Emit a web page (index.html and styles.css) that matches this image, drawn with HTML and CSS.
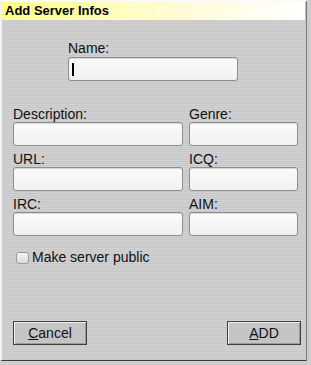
FILE: index.html
```html
<!DOCTYPE html>
<html lang="en">
<head>
  <meta charset="UTF-8">
  <title>Add Server Infos</title>
  <link rel="stylesheet" href="styles.css">
</head>
<body>
  <div class="window">
    <div class="titlebar">Add Server Infos</div>

    <div class="content">
      <div class="name-field">
        <div class="label">Name:</div>
        <div class="input"><span class="caret"></span></div>
      </div>

      <div class="fields">
        <div class="field">
          <div class="label">Description:</div>
          <div class="input"></div>
        </div>
        <div class="field">
          <div class="label">Genre:</div>
          <div class="input"></div>
        </div>
        <div class="field">
          <div class="label">URL:</div>
          <div class="input"></div>
        </div>
        <div class="field">
          <div class="label">ICQ:</div>
          <div class="input"></div>
        </div>
        <div class="field">
          <div class="label">IRC:</div>
          <div class="input"></div>
        </div>
        <div class="field">
          <div class="label">AIM:</div>
          <div class="input"></div>
        </div>
      </div>

      <label class="check-row">
        <span class="checkbox"></span>
        <span>Make server public</span>
      </label>

      <div class="buttons">
        <button class="btn"><u>C</u>ancel</button>
        <button class="btn"><u>A</u>DD</button>
      </div>
    </div>
  </div>
</body>
</html>
```

FILE: styles.css
```css
body {
  margin: 0;
  padding: 0;
  font-family: "Liberation Sans", Arial, sans-serif;
  font-size: 14px;
  color: #111;
  background: repeating-linear-gradient(#d2d2d2 0 1px, #c7c7c7 1px 2px);
}

.window {
  box-sizing: border-box;
  width: 307px;
  height: 361px;
  border-left: 2px solid #f2f2f2;
  border-top: 2px solid #fafafa;
  border-right: 1px solid #7a7a7a;
  border-bottom: 1px solid #3c3c3c;
}

.titlebar {
  height: 18px;
  line-height: 18px;
  padding-left: 3px;
  font-size: 13px;
  font-weight: bold;
  color: #000;
  background: linear-gradient(to right, #ffff8c, #fffbd8 60%, #ffffff);
  border-right: 1px solid #bcbcbc;
}

.content {
  padding: 0 5px 0 11px;
}

.label {
  line-height: 15px;
  height: 15px;
}

.input {
  box-sizing: border-box;
  height: 24px;
  border: 1px solid #8e8e8e;
  border-radius: 3px;
  background: linear-gradient(#fbfbfb, #f1f1f1);
  box-shadow: inset 0 1px 0 #d8d8d8;
}

.name-field {
  width: 170px;
  margin: 21px 0 0 55px;
}

.name-field .input {
  margin-top: 1px;
  padding: 5px 0 0 3px;
}

.caret {
  display: block;
  width: 2px;
  height: 13px;
  background: #000;
}

.fields {
  display: grid;
  grid-template-columns: 170px 109px;
  column-gap: 6px;
  row-gap: 6px;
  margin-top: 26px;
}

.check-row {
  display: flex;
  align-items: center;
  gap: 3px;
  margin: 14px 0 0 3px;
  line-height: 15px;
}

.checkbox {
  box-sizing: border-box;
  width: 13px;
  height: 12px;
  border: 1px solid #9a9a9a;
  border-radius: 3px;
  background: linear-gradient(#f4f4f4, #dcdcdc);
}

.buttons {
  display: flex;
  justify-content: space-between;
  margin-top: 56px;
}

.btn {
  box-sizing: border-box;
  width: 74px;
  height: 24px;
  padding: 0;
  font-family: "Liberation Sans", Arial, sans-serif;
  font-size: 14px;
  color: #111;
  background: #c4c4c4;
  border: 1px solid #3e3e3e;
  box-shadow: inset 1px 1px 0 #f0f0f0, inset -1px -1px 0 #9a9a9a;
}
```
